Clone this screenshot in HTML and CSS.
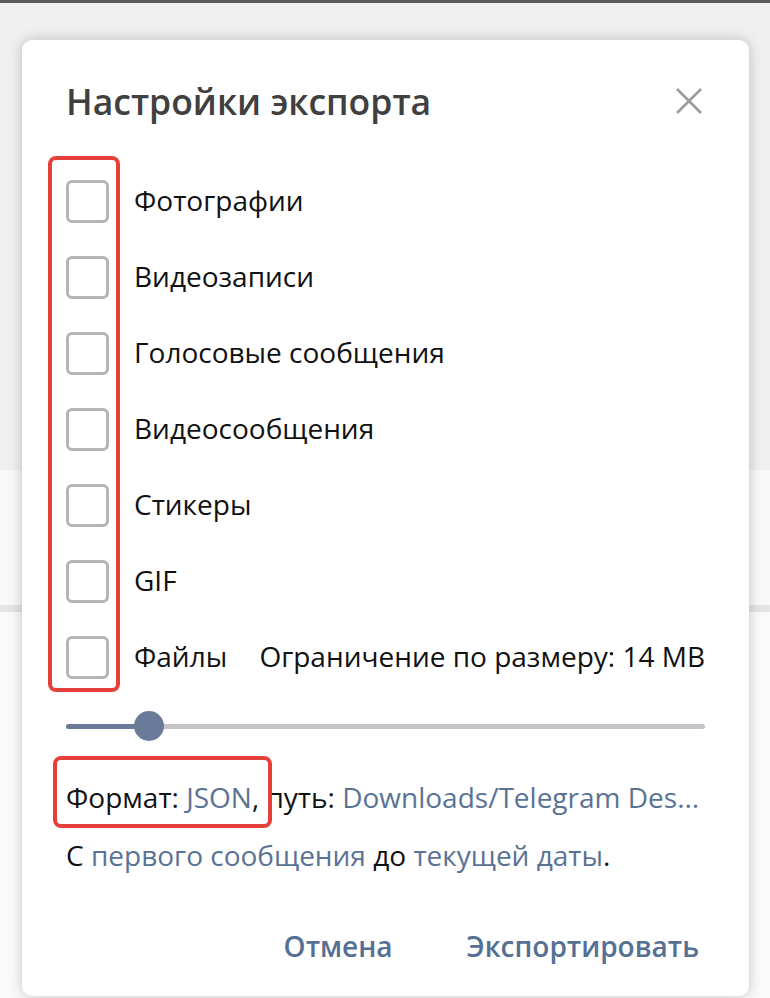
FILE: index.html
```html
<!DOCTYPE html>
<html>
<head>
  <meta charset="utf-8">
  <title>Настройки экспорта</title>
  <link rel="stylesheet" href="styles.css">
</head>
<body>

  <div class="dialog">
    <div class="dialog-head">
      <h2 class="title">Настройки экспорта</h2>
      <svg class="close" width="28" height="28" viewBox="0 0 28 28">
        <path d="M2 2 L26 26 M26 2 L2 26" stroke="#9b9b9b" stroke-width="2.6" fill="none"/>
      </svg>
    </div>

    <div class="options">
      <div class="mark mark-boxes"></div>
      <label class="option"><span class="box"></span><span class="label">Фотографии</span></label>
      <label class="option"><span class="box"></span><span class="label">Видеозаписи</span></label>
      <label class="option"><span class="box"></span><span class="label">Голосовые сообщения</span></label>
      <label class="option"><span class="box"></span><span class="label">Видеосообщения</span></label>
      <label class="option"><span class="box"></span><span class="label">Стикеры</span></label>
      <label class="option"><span class="box"></span><span class="label">GIF</span></label>
      <label class="option"><span class="box"></span><span class="label">Файлы</span><span class="label limit">Ограничение по размеру: 14 MB</span></label>
    </div>

    <div class="slider">
      <div class="track"></div>
      <div class="fill" style="width: 83px"></div>
      <div class="knob" style="left: 68px"></div>
    </div>

    <p class="line format">
      <span class="mark mark-format"></span>
      Формат: <a class="link">JSON</a>, путь: <a class="link">Downloads/Telegram Des...</a>
    </p>
    <p class="line">С <a class="link">первого сообщения</a> до <a class="link">текущей даты</a>.</p>

    <div class="buttons">
      <button class="btn">Отмена</button>
      <button class="btn">Экспортировать</button>
    </div>
  </div>

</body>
</html>
```

FILE: styles.css
```css
html, body {
  margin: 0;
  height: 998px;
  overflow: hidden;
}

body {
  font-family: "Open Sans", "Noto Sans", sans-serif;
  background: linear-gradient(to bottom,
    #5c5c5c 0, #5c5c5c 3px,
    #f0f0f0 3px, #f0f0f0 470px,
    #f9f9f9 470px, #f9f9f9 605px,
    #e4e4e4 605px, #e4e4e4 612px,
    #fafafa 612px);
}

.dialog {
  margin: 40px 0 0 22px;
  width: 727px;
  height: 956px;
  box-sizing: border-box;
  padding: 41px 44px 0 44px;
  background: #fff;
  border-radius: 10px;
  box-shadow: 0 0 14px rgba(0,0,0,0.22);
}

.dialog-head {
  display: flex;
  justify-content: space-between;
  align-items: center;
  height: 40px;
}

.title {
  margin: 0;
  font-size: 35.5px;
  font-weight: 600;
  line-height: 40px;
  color: #404040;
}

.close {
  margin-right: 2px;
}

.options {
  position: relative;
  margin-top: 59px;
  display: flex;
  flex-direction: column;
  gap: 33px;
}

.option {
  display: flex;
  align-items: center;
  height: 43px;
  font-size: 28px;
  color: #111;
}

.label {
  margin-bottom: 4px;
}

.box {
  width: 43px;
  height: 43px;
  box-sizing: border-box;
  border: 3px solid #b5b5b5;
  border-radius: 6px;
  margin-right: 25px;
  flex-shrink: 0;
}

.limit {
  margin-left: auto;
}

.mark {
  position: absolute;
  border: 4px solid #e5403a;
  border-radius: 8px;
  box-sizing: border-box;
}

.mark-boxes {
  left: -18px;
  top: -24px;
  width: 72px;
  height: 536px;
}

.slider {
  position: relative;
  height: 30px;
  margin-top: 32px;
}

.track, .fill {
  position: absolute;
  left: 0;
  top: 13px;
  height: 5px;
  border-radius: 3px;
}

.track {
  right: 0;
  background: #c4c4c8;
}

.fill {
  background: #6a7b9a;
}

.knob {
  position: absolute;
  top: 0;
  width: 30px;
  height: 30px;
  border-radius: 50%;
  background: #6a7b9a;
}

.line {
  margin: 0;
  font-size: 28px;
  line-height: 36px;
  color: #111;
  white-space: nowrap;
}

.format {
  position: relative;
  margin-top: 38px;
  margin-bottom: 22px;
}

.mark-format {
  left: -13px;
  top: -23px;
  width: 219px;
  height: 72px;
}

.link {
  color: #5a7394;
}

.buttons {
  display: flex;
  justify-content: flex-end;
  gap: 74px;
  margin-top: 55px;
  margin-right: 6px;
}

.btn {
  border: none;
  background: none;
  padding: 0;
  font-family: inherit;
  font-size: 28px;
  font-weight: 600;
  line-height: 36px;
  color: #557093;
}
```
